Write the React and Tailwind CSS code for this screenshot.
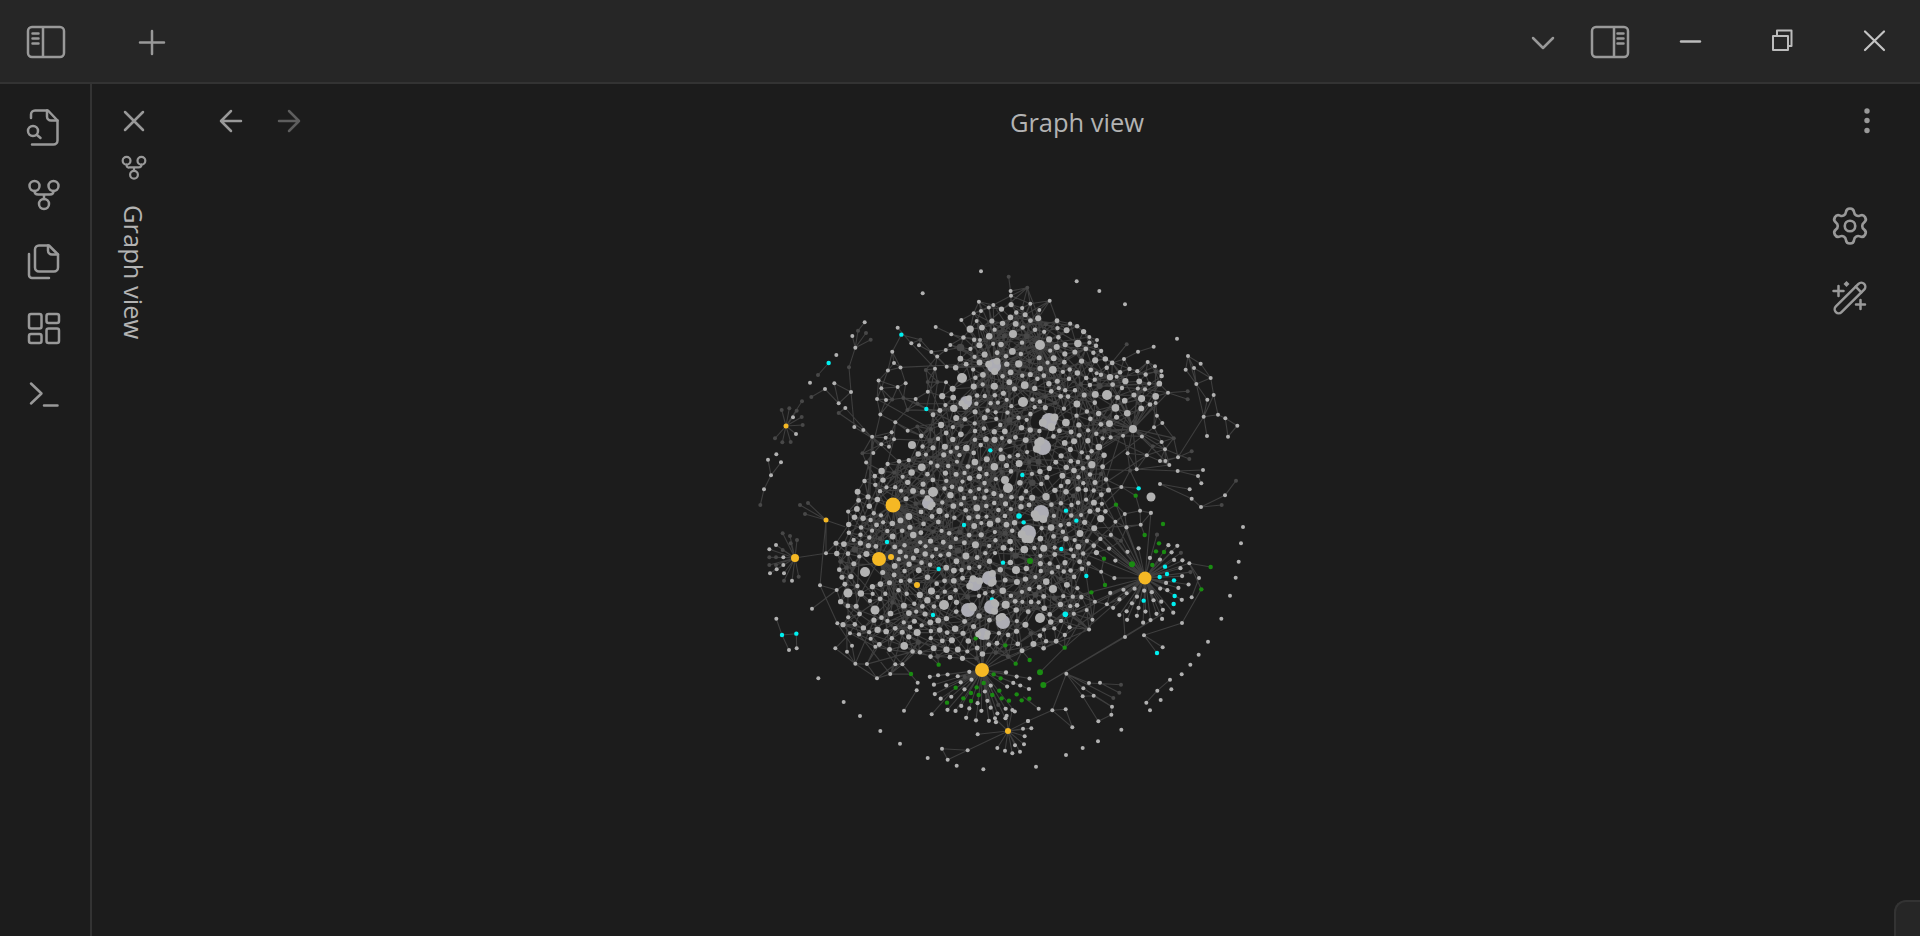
import React from 'react';
import { Settings } from 'lucide-react';

// --- GRAPH DATA ---
// points are read off two crops of the picture, at 3x, hence the conversions
const parse = (s, ox, oy) =>
  s.trim().split(/\s+/).map(p => {
    const [x, y] = p.split(',').map(Number);
    return [ox + x / 3, oy + y / 3];
  });
const a = s => parse(s, 750, 260);
const b = s => parse(s, 750, 510);

const GRAY = '#b2b2b2';
const DIM = '#484848';
const CYAN = '#00f0f0';
const GREEN = '#1a8c12';
const YELLOW = '#f5b824';

const CORE = [
  [1010, 303], [1083, 327], [1117, 367], [1163, 370], [1157, 403], [1117, 420], [1103, 467], [1110, 487], [1100, 543], [1080, 603],
  [1067, 643], [1017, 657], [950, 660], [890, 650], [843, 627], [835, 543], [860, 483], [917, 440], [950, 377], [963, 333],
];

// thinner areas round the dense middle
const SPARSE = [
  [[880, 345], [965, 330], [955, 380], [915, 442], [862, 485], [850, 480], [870, 420]],
  [[1117, 420], [1165, 400], [1175, 440], [1165, 500], [1130, 540], [1102, 545], [1105, 470]],
  [[843, 627], [890, 650], [950, 660], [930, 690], [880, 680], [845, 660]],
  [[1080, 603], [1100, 543], [1115, 600], [1085, 650], [1050, 665], [1067, 643]],
  [[975, 290], [1030, 285], [1075, 310], [1083, 327], [1010, 303], [963, 333]],
];

const HUBS = [
  [982, 670, 7], [879, 559, 7], [1145, 578, 6.5], [893, 505, 7.5], [795, 558, 4], [826, 520, 2.5],
  [1008, 731, 3], [891, 557, 3], [917, 585, 3], [786, 426, 2.5],
];

const LUMPS = [
  [994, 366, 7], [962, 378, 5], [966, 402, 6], [1049, 421, 8], [1043, 447, 8], [1023, 402, 5], [1133, 429, 4], [1107, 395, 5],
  [1040, 345, 5], [1013, 334, 4], [912, 445, 4], [928, 503, 6], [1008, 488, 5], [933, 492, 5], [1151, 497, 4.5], [1041, 513, 8],
  [1028, 533, 8], [975, 584, 7], [989, 578, 7], [968, 610, 7], [991, 607, 7], [983, 634, 6], [1003, 622, 7], [944, 605, 5],
  [875, 610, 4.5], [848, 593, 4.5], [865, 572, 5], [1040, 618, 5], [1053, 589, 4], [1016, 570, 4], [1005, 480, 4],
];

const FREE = [
  ...a('693,34 518,100 980,64 1048,93 1125,133 1281,236 259,285 180,368'),
  ...b('1479,51 1473,100 1466,155 1457,203 1440,257 1414,326 1374,395 1346,434 1321,464 1295,493 1264,538 1232,570 1200,601 1114,659 1044,694 998,714 948,735 858,770 700,778 620,767 533,744 450,701 391,663 330,618 281,576 205,505'),
];

const CHAINS = [
  // upper left
  a('344,187 324,212 316,263 297,322 303,396 266,430 253,370 303,396 313,501 392,550'),
  a('307,228 316,263'), a('348,219 316,263'), a('362,239 316,263'), a('225,387 266,430'), a('225,387 184,411'), a('204,345 236,309'),
  a('286,444 266,459 340,510 394,553'), a('286,444 390,560'),
  a('54,599 63,646 42,688 31,735'), a('93,607 63,646'), a('79,583 79,583'),
  // top
  a('776,50 783,107 841,131 832,155'), a('783,107 730,135 671,160 634,180 690,260'), a('730,135 693,153 680,183 690,240'),
  a('443,203 484,250 555,326 529,447'), a('557,201 604,223 640,240'), a('507,256 544,276 590,320'),
  // right nets
  a('1130,253 1088,305'), a('1122,297 1164,275 1211,260'), a('1088,305 1040,340'), a('1193,306 1162,344 1100,350'), a('1215,319 1162,344'),
  a('1234,333 1162,344'), a('1204,373 1110,405'), a('1254,398 1313,394'), a('1254,398 1313,418'), a('1254,398 1170,385'),
  a('1314,288 1352,311 1382,354 1391,405 1404,464 1361,470 1339,372 1314,288'), a('1332,324 1339,372 1382,354 1332,324 1314,288'),
  a('1307,329 1314,288'), a('1307,329 1339,372 1372,419 1361,470 1391,405'), a('1404,464 1426,475 1462,497 1434,530 1426,475'),
  a('1361,470 1371,528'), a('1361,470 1284,592 1230,603'), a('1245,568 1150,507 1217,429'), a('1245,568 1318,597'), a('1284,592 1325,574'),
  a('1353,741 1425,706 1458,662'), a('1353,741 1415,735'), a('1283,633 1359,630'), a('1258,615 1160,628 1283,633 1344,648 1354,670'),
  a('1319,688 1230,672 1325,716 1353,741'),
  // lower left bits
  b('79,326 96,375 139,371 140,415'), b('96,375 117,420'),
  b('186,296 260,240 210,226 228,31'), b('228,31 228,130 134,144'), b('228,31 285,50'),
  // lower right
  b('1318,160 1382,171'), b('1318,160 1354,238 1296,339 1182,376 1238,412'), b('1182,376 1221,429'), b('1125,381 1240,310 880,525'),
  b('1125,381 1120,310'), b('1296,339 1182,376'), b('1318,160 1184,203'), b('1318,160 1347,204 1325,262'),
  b('949,491 1017,519 1113,524'), b('1050,518 1108,548'), b('949,491 1000,535 1086,590 1084,614 1045,634 998,559 1031,557 1086,590'),
  b('949,491 998,559'), b('949,491 1090,564'), b('907,601 947,598 967,652 907,601'), b('907,601 834,633'), b('907,601 949,491'),
  b('870,487 944,413 1010,300'), b('880,525 1125,381'), b('944,413 1130,250'),
  b('1260,509 1222,542 1189,578'), b('593,749 653,721 576,716 593,749'), b('653,721 775,663'),
  b('866,596 820,560'), b('500,541 462,602'), b('545,613 600,550'), b('503,518 420,420'), b('436,463 410,425'),
  b('376,410 300,370 256,415'), b('291,425 290,340'), b('306,407 262,340 210,226'),
];

const FAN_BOTTOM = b('787,600 834,633 844,655 819,656 824,679 822,703 810,725 787,730 765,722 742,714 795,706 770,617 735,625 683,673');
const FAN_LEFT = b('58,118 78,105 98,70 120,78 141,90 122,100 98,120 58,142 78,142 100,142 58,165 78,165 100,165 60,190 80,178 102,212 126,212 146,200 102,190');
const FAN_LEFT_DIM = [2, 3, 4, 5, 6, 7, 8, 10, 11, 15, 17];
const FAN_SMALL = a('95,450 118,445 140,452 156,424 129,472 155,471 158,495 138,522 122,546 97,547 75,535');
const FAN_SMALL_DIM = [0, 1, 2, 3, 5, 6, 8, 9, 10];

const CYANS = [
  ...a('454,224 236,309 529,447 721,571 817,645 1166,685'),
  ...b('411,96 642,45 821,37 948,2 979,32 934,117 759,158 566,177 1245,170 1251,192 1229,201 1272,211 1274,258 1271,282 1181,272 1009,198 726,268 549,315 96,375 139,371 1221,429'),
];
const CYANS_BIG = b('807,18 946,313');
const GREENS = [
  ...a('1098,734 1157,707'),
  ...b('617,533 680,532 701,519 731,493 752,505 663,549 686,555 727,555 748,542 755,565 777,572 800,553 815,571 838,566 640,565 663,573 591,578 797,461 839,450 566,464 483,492 766,406 944,413 677,385 1207,165 1184,75 1227,100 1218,124 1242,126 1239,42 1062,146 1065,225 1024,247 1382,171 1354,238'),
];
const GREENS_BIG = b('870,487 880,525 840,153 1146,163');
const DIMS = new Set(
  [...a('324,212 348,219 362,239 297,322 184,411 266,459 204,345 31,735 776,50 1130,253 1313,394 1313,418 1325,574 1318,597 1458,662 1415,735'), ...b('1113,524 1108,548 1090,564 683,673 735,625')].map(String)
);

// --- GENERATION (seeded so the picture is the same on every load) ---
const buildGraph = () => {
  let seed = 91127;
  const rnd = () => {
    seed = (seed * 1664525 + 1013904223) % 4294967296;
    return seed / 4294967296;
  };
  const inside = (x, y, poly) => {
    let hit = false;
    for (let i = 0, j = poly.length - 1; i < poly.length; j = i++) {
      const [xi, yi] = poly[i];
      const [xj, yj] = poly[j];
      if (yi > y !== yj > y && x < ((xj - xi) * (y - yi)) / (yj - yi) + xi) hit = !hit;
    }
    return hit;
  };

  const nodes = [];
  const edges = [];
  const add = (x, y, r, c) => nodes.push({ x, y, r, c });
  const clear = (x, y, r, gap) => nodes.every(n => Math.hypot(n.x - x, n.y - y) > n.r + r + gap);

  HUBS.forEach(([x, y, r]) => add(x, y, r, YELLOW));
  CYANS.forEach(([x, y]) => add(x, y, 2.2, CYAN));
  CYANS_BIG.forEach(([x, y]) => add(x, y, 2.8, CYAN));
  GREENS.forEach(([x, y]) => add(x, y, 2.2, GREEN));
  GREENS_BIG.forEach(([x, y]) => add(x, y, 3, GREEN));
  LUMPS.forEach(([x, y, r]) => {
    add(x, y, r, r > 5.5 ? '#adadb5' : GRAY);
    if (r > 5.5) {
      for (let i = 0; i < 3; i++) {
        const t = rnd() * 6.28;
        add(x + Math.cos(t) * r * 0.8, y + Math.sin(t) * r * 0.8, r * 0.5, GRAY);
      }
    }
  });

  const linkNear = (n, k, max) => {
    nodes
      .filter(m => m !== n)
      .map(m => [Math.hypot(m.x - n.x, m.y - n.y), m])
      .filter(([d]) => d < max)
      .sort((p, q) => p[0] - q[0])
      .slice(0, k)
      .forEach(([, m]) => edges.push([n.x, n.y, m.x, m.y]));
  };

  // dense middle
  const coreStart = nodes.length;
  for (let i = 0; i < 14000; i++) {
    const x = 830 + rnd() * 340;
    const y = 300 + rnd() * 365;
    const r = 2.1 + rnd() * rnd() * 2;
    if (inside(x, y, CORE) && clear(x, y, r, 2.3)) add(x, y, r, rnd() < 0.08 ? DIM : GRAY);
  }
  const core = nodes.slice(coreStart);

  // thinner areas
  const sparseStart = nodes.length;
  SPARSE.forEach(poly => {
    for (let i = 0; i < 900; i++) {
      const x = 840 + rnd() * 340;
      const y = 285 + rnd() * 410;
      if (inside(x, y, poly) && !inside(x, y, CORE) && clear(x, y, 2, 5.5)) add(x, y, 2, rnd() < 0.35 ? DIM : GRAY);
    }
  });
  const sparse = nodes.slice(sparseStart);

  // rings round the two big hubs
  const ring = (cx, cy, from, to, ra, rb, count, gap) => {
    let placed = 0;
    for (let i = 0; i < count * 12 && placed < count; i++) {
      const t = from + rnd() * (to - from);
      const d = ra + rnd() * (rb - ra);
      const x = cx + Math.cos(t) * d;
      const y = cy + Math.sin(t) * d;
      if (clear(x, y, 2, gap)) {
        add(x, y, 2.1, rnd() < 0.1 ? DIM : GRAY);
        edges.push([cx, cy, x, y]);
        placed++;
      }
    }
  };
  ring(982, 670, 0.1, 3.05, 12, 54, 110, 2.6);
  ring(1145, 578, -1.4, 2.8, 12, 46, 55, 3.2);
  ring(1145, 578, 2.8, 4.9, 20, 75, 30, 7);

  // points read off the picture
  a('671,160 693,153 832,155 868,150 852,168 875,178 898,186 918,195 941,206 988,203 1013,208 1018,231 1041,240 601,255 625,258 432,309 418,327 394,385 443,381 467,370 408,420 467,420 497,417 469,450 436,487 425,517 407,533 473,512 417,560 394,553 370,579 377,420 588,367 606,423 1088,305 1122,297 1193,306 1215,319 1234,333 1162,344 1204,373 1217,429 1237,489 1235,546 1245,568 1230,603 1258,615').forEach(([x, y]) => {
    if (clear(x, y, 2, 1)) {
      add(x, y, 2, GRAY);
      linkNear(nodes[nodes.length - 1], 3, 45);
    }
  });

  CHAINS.forEach(pts => {
    pts.forEach(([x, y], i) => {
      if (clear(x, y, 1.5, 0.5)) add(x, y, 2, DIMS.has(String([x, y])) ? DIM : GRAY);
      if (i) edges.push([pts[i - 1][0], pts[i - 1][1], x, y]);
    });
  });
  FREE.forEach(([x, y]) => add(x, y, 2, GRAY));

  const fan = (pts, hx, hy, dim = []) =>
    pts.forEach(([x, y], i) => {
      add(x, y, 2, dim.includes(i) ? DIM : GRAY);
      edges.push([hx, hy, x, y]);
    });
  fan(FAN_BOTTOM, 1008, 731);
  fan(FAN_LEFT, 795, 558, FAN_LEFT_DIM);
  fan(FAN_SMALL, 786, 426, FAN_SMALL_DIM);
  [[805, 514], [800, 505], [808, 503]].forEach(([x, y]) => {
    add(x, y, 2, DIM);
    edges.push([826, 520, x, y]);
  });

  // edges of the dense part
  core.forEach(n => {
    linkNear(n, 4, 30);
    for (let i = 0; i < 7; i++) {
      const m = core[Math.floor(rnd() * core.length)];
      if (Math.hypot(m.x - n.x, m.y - n.y) < 75) edges.push([n.x, n.y, m.x, m.y]);
    }
  });
  sparse.forEach(n => {
    linkNear(n, 4, 42);
    for (let i = 0; i < 14; i++) {
      const m = core[Math.floor(rnd() * core.length)];
      if (Math.hypot(m.x - n.x, m.y - n.y) < 70) edges.push([n.x, n.y, m.x, m.y]);
    }
  });
  // long strands from the hubs
  HUBS.slice(0, 4).forEach(([hx, hy]) => {
    core.forEach(n => {
      if (Math.hypot(n.x - hx, n.y - hy) < 120 && rnd() < 0.12) edges.push([hx, hy, n.x, n.y]);
    });
  });
  [[1133, 429], [994, 366], [1040, 345]].forEach(([hx, hy]) => {
    nodes.forEach(n => {
      if (Math.hypot(n.x - hx, n.y - hy) < 55 && rnd() < 0.5) edges.push([hx, hy, n.x, n.y]);
    });
  });
  // the linked nodes along the fan-shaped top
  a('671,160 730,135 832,155 875,178').forEach(([x, y]) => {
    [[1013, 334], [1013, 334], [994, 340]].forEach(([hx, hy]) => edges.push([x, y, hx, hy]));
  });

  const d = edges.map(([x1, y1, x2, y2]) => `M${x1.toFixed(1)} ${y1.toFixed(1)}L${x2.toFixed(1)} ${y2.toFixed(1)}`).join('');
  return { nodes, d };
};

const graph = buildGraph();

const Graph = () => (
  <svg className="absolute left-0 top-0 h-[852px] w-[1744px]" viewBox="176 84 1744 852">
    <path d={graph.d} stroke="#3e3e3e" strokeWidth="1.1" fill="none" />
    {graph.nodes.map((n, i) => (
      <circle key={i} cx={n.x} cy={n.y} r={n.r} fill={n.c} />
    ))}
  </svg>
);

// Small drawing whose coordinates are the ones measured on the page
const Glyph = ({ cx, cy, w = 44, h = 44, sw = 2.5, className = 'text-[#999999]', children }) => (
  <svg
    className={`shrink-0 ${className}`}
    width={w}
    height={h}
    viewBox={`${cx - w / 2} ${cy - h / 2} ${w} ${h}`}
    fill="none"
    stroke="currentColor"
    strokeWidth={sw}
    strokeLinecap="round"
    strokeLinejoin="round"
  >
    {children}
  </svg>
);

const GraphIcon = ({ cx, cy, k = 1, sw, className }) => (
  <Glyph cx={cx} cy={cy} sw={sw} className={className}>
    <circle cx={cx - 9.5 * k} cy={cy - 8 * k} r={5 * k} />
    <circle cx={cx + 9.5 * k} cy={cy - 8 * k} r={5 * k} />
    <circle cx={cx} cy={cy + 10 * k} r={5 * k} />
    <path
      d={`M${cx - 9.5 * k} ${cy - 3 * k}q0 3.5 ${3.5 * k} ${3.5 * k}h${12 * k}q${3.5 * k} 0 ${3.5 * k} ${-3.5 * k}M${cx} ${cy + 0.5 * k}v${4.5 * k}`}
    />
  </Glyph>
);

const App = () => {
  return (
    <div className="flex h-screen w-screen flex-col overflow-hidden bg-[#1c1c1c] font-['Open_Sans','Liberation_Sans',sans-serif] text-[#b3b3b3]">
      {/* Barre de titre */}
      <div className="flex h-[84px] shrink-0 items-center border-b-2 border-[#333333] bg-[#262626]">
        <div className="ml-[24px]">
          <Glyph cx={46} cy={41}>
            <rect x={28} y={27} width={36} height={30} rx={4} />
            <path d="M43 28v28M32.500 33.500h6M32.500 38.500h6M32.500 43.500h6" />
          </Glyph>
        </div>
        <div className="ml-[62px]">
          <Glyph cx={153} cy={41}>
            <path d="M141 42.500h24M153 31v23" />
          </Glyph>
        </div>
        <div className="flex-1" />
        <Glyph cx={1543} cy={41}>
          <path d="M1533 38l10 10 10-10" />
        </Glyph>
        <div className="ml-[23px]">
          <Glyph cx={1610} cy={41}>
            <rect x={1592} y={27} width={36} height={30} rx={4} />
            <path d="M1614 28v28M1617.500 33.500h6M1617.500 38.500h6M1617.500 43.500h6" />
          </Glyph>
        </div>
        <div className="ml-[36px]">
          <Glyph cx={1690} cy={41} className="text-[#bcbcbc]" sw={2.4}>
            <path d="M1681 41.500h19" />
          </Glyph>
        </div>
        <div className="ml-[48px]">
          <Glyph cx={1782} cy={41} className="text-[#bcbcbc]" sw={2}>
            <rect x={1773} y={36} width={15} height={14} />
            <path d="M1777 35v-4.500h14.500V46h-3" />
          </Glyph>
        </div>
        <div className="ml-[48px]">
          <Glyph cx={1874} cy={41} className="text-[#c4c4c4]" sw={2.2}>
            <path d="M1865 31.500l19 18.500M1884 31.500l-19 18.500" />
          </Glyph>
        </div>
        <div className="w-[24px]" />
      </div>

      <div className="flex min-h-0 flex-1">
        {/* Ruban */}
        <div className="flex w-[92px] shrink-0 flex-col items-center gap-[23px] border-r-2 border-[#333333] pr-[2px] pt-[21px]">
          <Glyph cx={45} cy={127}>
            <path d="M32 118v-3.500a4 4 0 0 1 4-4h13l9.500 10v20a4 4 0 0 1-4 4H33" />
            <path d="M48 110.500v6a4 4 0 0 0 4 4h6.500" />
            <circle cx={34} cy={131} r={5} />
            <path d="M38 135l3.500 3" />
          </Glyph>
          <GraphIcon cx={45} cy={194} />
          <Glyph cx={45} cy={261}>
            <path d="M40 245.500h10l9 9v13a4 4 0 0 1-4 4H40a4 4 0 0 1-4-4v-18a4 4 0 0 1 4-4z" />
            <path d="M49 245.500v5a4 4 0 0 0 4 4h6M30 254v21a3 3 0 0 0 3 3h17" />
          </Glyph>
          <Glyph cx={45} cy={328}>
            <rect x={30} y={314} width={12.5} height={14.5} rx={2} />
            <rect x={47.5} y={314} width={12.5} height={9} rx={2} />
            <rect x={47.5} y={328.5} width={12.5} height={14.5} rx={2} />
            <rect x={30} y={334} width={12.5} height={9} rx={2} />
          </Glyph>
          <Glyph cx={45} cy={395}>
            <path d="M32 383.500l10.500 10-10.500 10M45 405.500h13.500" />
          </Glyph>
        </div>

        {/* Onglets verticaux */}
        <div className="flex w-[84px] shrink-0 flex-col items-center pt-[15px]">
          <Glyph cx={134} cy={121}>
            <path d="M125 112l18 18M143 112l-18 18" />
          </Glyph>
          <div className="mt-[2px]">
            <GraphIcon cx={134} cy={165} k={0.78} sw={2.2} />
          </div>
          <span className="mt-[16px] text-[25.5px] leading-[32px] [writing-mode:vertical-rl]">Graph view</span>
        </div>

        {/* Vue du graphe */}
        <div className="relative min-w-0 flex-1">
          <Graph />
          <div className="relative flex h-[76px] items-center">
            <div className="flex w-[137px] shrink-0 gap-[15px] pl-[32px]">
              <Glyph cx={230} cy={122}>
                <path d="M241 121h-20M231 111l-10 10 10 10" />
              </Glyph>
              <Glyph cx={289} cy={122} className="text-[#5e5e5e]">
                <path d="M279 121h20M289 111l10 10-10 10" />
              </Glyph>
            </div>
            <div className="flex-1 text-center text-[25.5px] leading-[32px]">Graph view</div>
            <div className="w-[79px] shrink-0 pl-[4px]">
              <Glyph cx={1867} cy={122} sw={0}>
                <circle cx={1867} cy={111} r={2.7} fill="currentColor" />
                <circle cx={1867} cy={120.5} r={2.7} fill="currentColor" />
                <circle cx={1867} cy={130.5} r={2.7} fill="currentColor" />
              </Glyph>
            </div>
          </div>

          {/* Contrôles du graphe */}
          <div className="absolute right-[48px] top-[121px] flex flex-col gap-[26px] text-[#999999]">
            <Settings size={42} strokeWidth={1.5} className="mx-[1px]" />
            <div className="mt-[2px]">
              <Glyph cx={1850} cy={297}>
                <g transform="rotate(-45 1850 298)">
                  <rect x={1830} y={294} width={40} height={8} rx={4} />
                  <path d="M1862 294v8" />
                </g>
                <path d="M1838.500 286v10M1833.500 291h10M1860.500 300v9M1856 304.500h9" />
                <path d="M1846.500 281l3 3-3 3-3-3z" fill="currentColor" stroke="none" />
              </Glyph>
            </div>
          </div>

          {/* Coin de la barre d'état */}
          <div className="absolute bottom-0 right-0 h-[36px] w-[26px] rounded-tl-[12px] border-l-2 border-t-2 border-[#333333] bg-[#262626]" />
        </div>
      </div>
    </div>
  );
};

export default App;
